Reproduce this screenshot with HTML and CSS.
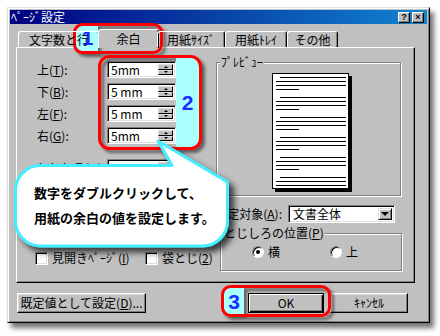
FILE: index.html
```html
<!DOCTYPE html>
<html lang="ja">
<head>
  <meta charset="UTF-8" />
  <title>ﾍﾟｰｼﾞ設定</title>
  <link rel="stylesheet" href="styles.css">
</head>
<body>
  <div class="window">
    <div class="titlebar">
      <span class="title">ﾍﾟｰｼﾞ設定</span>
      <span class="tbtn">?</span>
      <span class="tbtn">×</span>
    </div>
    <div class="tabs">
      <div class="tab tab-chars">文字数と行</div>
      <div class="tab tab-margin active">余白</div>
      <div class="tab tab-size">用紙ｻｲｽﾞ</div>
      <div class="tab tab-tray">用紙ﾄﾚｲ</div>
      <div class="tab tab-other">その他</div>
    </div>
    <div class="panel">
      <div class="col-left">
        <div class="field"><span class="label">上(<u>T</u>):</span><div class="spin"><span class="val">5mm</span><span class="arrows"><i class="up"></i><i class="dn"></i></span></div></div>
        <div class="field"><span class="label">下(<u>B</u>):</span><div class="spin"><span class="val">5 mm</span><span class="arrows"><i class="up"></i><i class="dn"></i></span></div></div>
        <div class="field"><span class="label">左(<u>F</u>):</span><div class="spin"><span class="val">5 mm</span><span class="arrows"><i class="up"></i><i class="dn"></i></span></div></div>
        <div class="field"><span class="label">右(<u>G</u>):</span><div class="spin"><span class="val">5mm</span><span class="arrows"><i class="up"></i><i class="dn"></i></span></div></div>
        <div class="field gap"><span class="label">とじしろ(<u>U</u>):</span><div class="spin"><span class="val">0 mm</span><span class="arrows"><i class="up"></i><i class="dn"></i></span></div></div>
        <div class="checks">
          <label class="check check-facing"><span class="box"></span>見開きﾍﾟｰｼﾞ(<u>I</u>)</label>
          <label class="check"><span class="box"></span>袋とじ(<u>2</u>)</label>
        </div>
      </div>
      <div class="col-right">
        <div class="group preview">
          <span class="group-label">ﾌﾟﾚﾋﾞｭｰ</span>
          <div class="paper">
            <svg width="75" height="114" viewBox="0 0 75 114">
              <path stroke="#000" stroke-width="1" fill="none" d="M7 3.5h66M3 7.5h70M3 11.5h70M3 15.5h23M7 23.5h66M3 27.5h70M3 31.5h70M3 35.5h23M7 43.5h66M3 47.5h70M3 51.5h70M3 55.5h23M7 63.5h66M3 67.5h70M3 71.5h70M3 75.5h23M7 83.5h66M3 87.5h70M3 91.5h70M3 95.5h23M7 103.5h66M3 107.5h70M3 111.5h70"/>
            </svg>
          </div>
        </div>
        <div class="apply">
          <span class="apply-label">設定対象(<u>A</u>):</span>
          <div class="select"><span class="val">文書全体</span><span class="drop"></span></div>
        </div>
        <div class="group gutter">
          <span class="group-label">とじしろの位置(<u>P</u>)</span>
          <div class="radios">
            <span class="radio radio-side"><span class="dot on"></span>横</span>
            <span class="radio"><span class="dot"></span>上</span>
          </div>
        </div>
      </div>
    </div>
    <div class="buttons">
      <button class="btn btn-default-set">既定値として設定(<u>D</u>)...</button>
      <button class="btn btn-ok">OK</button>
      <button class="btn btn-cancel">ｷｬﾝｾﾙ</button>
    </div>
  </div>

  <!-- annotations drawn over the dialog -->
  <svg class="overlay" width="440" height="336" viewBox="0 0 440 336">
    <defs>
      <filter id="markShadow" x="-20%" y="-20%" width="140%" height="150%">
        <feDropShadow dx="3" dy="3" stdDeviation="1.5" flood-color="#000" flood-opacity="0.5"/>
      </filter>
      <filter id="bubbleShadow" x="-20%" y="-30%" width="140%" height="160%">
        <feDropShadow dx="5" dy="5" stdDeviation="3" flood-color="#000" flood-opacity="0.7"/>
      </filter>
      <clipPath id="clip1"><rect x="76" y="26" width="84" height="25" rx="6"/></clipPath>
      <clipPath id="clip2"><rect x="101" y="58" width="99" height="90" rx="8"/></clipPath>
      <clipPath id="clip3"><rect x="224" y="288" width="105" height="27" rx="6"/></clipPath>
    </defs>

    <g filter="url(#markShadow)">
      <rect x="76" y="26" width="22" height="25" fill="#aaffff" clip-path="url(#clip1)"/>
      <rect x="74.5" y="24.5" width="87" height="28" rx="8" fill="none" stroke="#ff0000" stroke-width="3"/>
    </g>
    <text class="num" x="87.5" y="45">1</text>

    <g filter="url(#markShadow)">
      <rect x="176" y="58" width="24" height="90" fill="#aaffff" clip-path="url(#clip2)"/>
      <rect x="99.5" y="56.5" width="101" height="92" rx="10" fill="none" stroke="#ff0000" stroke-width="3"/>
    </g>
    <text class="num" x="187.5" y="110">2</text>

    <g filter="url(#markShadow)">
      <rect x="224" y="288" width="20" height="27" fill="#aaffff" clip-path="url(#clip3)"/>
      <rect x="222.5" y="286.5" width="107" height="29" rx="8" fill="none" stroke="#ff0000" stroke-width="3"/>
    </g>
    <text class="num" x="234" y="309">3</text>

    <path filter="url(#bubbleShadow)" fill="#fff" stroke="#44eeff" stroke-width="3" stroke-linejoin="round"
          d="M40 165.5H172L158 141L227.5 182V221A25 25 0 0 1 202.5 246H40A25 25 0 0 1 15.5 221V190A25 25 0 0 1 40 165.5Z"/>
    <text class="bubble-text" x="34" y="198">数字をダブルクリックして、</text>
    <text class="bubble-text" x="34" y="223">用紙の余白の値を設定します。</text>
  </svg>
</body>
</html>
```

FILE: styles.css
```css
* { margin: 0; padding: 0; box-sizing: border-box; }
body {
  width: 440px;
  height: 336px;
  overflow: hidden;
  position: relative;
  background: #fff;
  font-family: "Noto Sans CJK JP", sans-serif;
  font-size: 12px;
  line-height: 14px;
  color: #000;
}
u { text-decoration: underline; text-underline-offset: 1px; }

/* window frame */
.window {
  width: 423px;
  height: 316px;
  margin: 7px 0 0 7px;
  padding: 2px;
  background: #c0c0c0;
  border: 1px solid;
  border-color: #dfdfdf #000 #000 #dfdfdf;
  box-shadow: inset 1px 1px #fff, inset -1px -1px #808080, 4px 5px 5px rgba(0,0,0,0.55);
}
.titlebar {
  height: 14px;
  display: flex;
  align-items: center;
  padding: 0 3px 0 1px;
  color: #fff;
  background: linear-gradient(to right, #000080, #1084d0);
}
.title { flex: 1; line-height: 14px; }
.tbtn {
  width: 12px;
  height: 11px;
  background: #c0c0c0;
  border: 1px solid;
  border-color: #fff #000 #000 #fff;
  box-shadow: inset -1px -1px #808080;
  color: #000;
  font: bold 9px/9px "Liberation Sans", sans-serif;
  text-align: center;
}
.tbtn + .tbtn { margin-left: 2px; }

/* tabs */
.tabs {
  display: flex;
  align-items: flex-end;
  height: 18px;
  margin: 5px 0 0 8px;
  position: relative;
  z-index: 1;
}
.tab {
  height: 16px;
  border: 1px solid;
  border-bottom: none;
  border-color: #fff #000 transparent #fff;
  border-radius: 3px 3px 0 0;
  box-shadow: inset -1px 0 #808080;
  text-align: center;
  line-height: 15px;
  white-space: nowrap;
}
.tab-chars { width: 82px; }
.tab-margin { width: 57px; }
.tab-size { width: 68px; }
.tab-tray { width: 62px; }
.tab-other { width: 51px; }
.tab.active {
  width: 61px;
  height: 19px;
  margin: 0 -2px -1px;
  background: #c0c0c0;
  line-height: 17px;
}

/* tab page */
.panel {
  width: 399px;
  height: 236px;
  margin-left: 6px;
  border: 1px solid;
  border-color: #fff #000 #000 #fff;
  box-shadow: inset -1px -1px #808080;
  display: flex;
}
.col-left {
  width: 199px;
  flex-shrink: 0;
  display: flex;
  flex-direction: column;
  padding: 13px 0 17px 20px;
}
.field {
  display: flex;
  align-items: center;
  height: 17px;
  margin-bottom: 5px;
}
.field.gap { margin-top: 10px; }
.label { width: 70px; white-space: nowrap; }
.spin {
  width: 69px;
  height: 17px;
  display: flex;
  padding: 1px 2px;
  background: #fff;
  border: 1px solid;
  border-color: #808080 #fff #fff #808080;
  box-shadow: inset 1px 1px #000, inset -1px -1px #dfdfdf;
}
.val { flex: 1; padding-left: 1px; line-height: 13px; white-space: nowrap; }
.arrows { width: 15px; display: flex; flex-direction: column; margin: 1px 0; }
.arrows i {
  flex: 1;
  display: flex;
  align-items: center;
  justify-content: center;
  background: #c0c0c0;
  border: 1px solid;
  border-color: #dfdfdf #000 #000 #dfdfdf;
}
.arrows i::after {
  content: "";
  border-left: 2px solid transparent;
  border-right: 2px solid transparent;
}
.arrows .up::after { border-bottom: 2px solid #000; }
.arrows .dn::after { border-top: 2px solid #000; }

.checks { display: flex; margin: auto 0 0 -2px; white-space: nowrap; }
.check { display: flex; align-items: center; }
.check-facing { width: 110px; }
.box {
  width: 13px;
  height: 13px;
  margin-right: 4px;
  background: #fff;
  border: 1px solid;
  border-color: #808080 #fff #fff #808080;
  box-shadow: inset 1px 1px #000, inset -1px -1px #dfdfdf;
}

.col-right { width: 186px; flex-shrink: 0; display: flex; flex-direction: column; }
.group {
  border: 1px solid #808080;
  box-shadow: inset 1px 1px #fff, 1px 1px #fff;
}
.group-label {
  display: block;
  width: fit-content;
  height: 12px;
  margin: -7px 0 0 3px;
  padding: 0 1px;
  line-height: 12px;
  background: #c0c0c0;
  white-space: nowrap;
}
.preview { width: 185px; height: 134px; margin-top: 14px; }
.paper {
  width: 77px;
  height: 116px;
  margin: 5px 0 0 55px;
  background: #fff;
  border: 1px solid #000;
  box-shadow: 3px 3px 0 #000;
}
.paper svg { display: block; }

.apply {
  display: flex;
  align-items: center;
  justify-content: flex-end;
  height: 18px;
  margin: 9px 7px 0 -10px;
}
.apply-label { margin-right: 6px; white-space: nowrap; flex-shrink: 0; }
.select {
  width: 107px;
  height: 18px;
  flex-shrink: 0;
  display: flex;
  padding: 2px;
  background: #fff;
  border: 1px solid;
  border-color: #808080 #fff #fff #808080;
  box-shadow: inset 1px 1px #000, inset -1px -1px #dfdfdf;
}
.select .val { padding-left: 2px; line-height: 12px; }
.drop {
  width: 14px;
  display: flex;
  align-items: center;
  justify-content: center;
  background: #c0c0c0;
  border: 1px solid;
  border-color: #dfdfdf #000 #000 #dfdfdf;
  box-shadow: inset 1px 1px #fff, inset -1px -1px #808080;
}
.drop::after {
  content: "";
  border-left: 4px solid transparent;
  border-right: 4px solid transparent;
  border-top: 4px solid #000;
}

.gutter { width: 182px; height: 38px; margin: 10px 0 0 4px; }
.gutter .group-label { margin-left: 2px; }
.radios { display: flex; margin: 7px 0 0 31px; }
.radio { display: flex; align-items: center; line-height: 12px; }
.radio-side { width: 78px; }
.dot {
  width: 12px;
  height: 12px;
  margin-right: 4px;
  border-radius: 50%;
  background: #fff;
  border: 1px solid;
  border-color: #808080 #fff #fff #808080;
  box-shadow: inset 1px 1px #000;
  display: flex;
  align-items: center;
  justify-content: center;
}
.dot.on::after {
  content: "";
  width: 4px;
  height: 4px;
  border-radius: 50%;
  background: #000;
}

/* bottom buttons */
.buttons { display: flex; margin-top: 10px; }
.btn {
  height: 20px;
  font: inherit;
  line-height: 16px;
  color: #000;
  background: #c0c0c0;
  border: 1px solid;
  border-color: #fff #000 #000 #fff;
  box-shadow: inset -1px -1px #808080, inset 1px 1px #dfdfdf;
  white-space: nowrap;
}
.btn-default-set { width: 129px; margin-left: 7px; }
.btn-ok {
  width: 76px;
  margin-left: 102px;
  border-color: #000;
  box-shadow: inset 1px 1px #fff, inset -1px -1px #000, inset -2px -2px #808080;
}
.btn-cancel { width: 78px; margin-left: 6px; }

/* annotation overlay */
.overlay { position: absolute; top: 0; left: 0; pointer-events: none; }
.num {
  font: bold 21px "Liberation Sans", sans-serif;
  fill: #1a2cff;
  text-anchor: middle;
}
.bubble-text {
  font-family: "Noto Sans CJK JP", sans-serif;
  font-weight: bold;
  font-size: 13px;
  fill: #000;
}
```
